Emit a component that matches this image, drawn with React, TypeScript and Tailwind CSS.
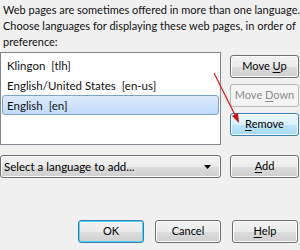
import * as React from 'react';

const font = { fontFamily: 'Lato, "Noto Sans", sans-serif' };

const btnBase =
  'h-[23px] rounded-[3px] border text-[11px] leading-[20px] text-center select-none whitespace-nowrap';
const btnNormal =
  'text-black border-[#707070] bg-[linear-gradient(to_bottom,#f2f2f2_0%,#ebebeb_50%,#dddddd_51%,#cfcfcf_100%)] shadow-[inset_0_0_0_1px_#fcfcfc]';
const btnHover =
  'text-black border-[#3c7fb1] bg-[linear-gradient(to_bottom,#eaf6fd_0%,#d9f0fc_50%,#bee6fd_51%,#a7d9f5_100%)] shadow-[inset_0_0_0_1px_#f4fbff]';
const btnDisabled = 'border-[#b5b9bc] bg-[#f4f4f4] text-[#8d8d8d]';
const btnDefault =
  'text-black border-[#3c7fb1] bg-[linear-gradient(to_bottom,#f2f2f2_0%,#ebebeb_50%,#dddddd_51%,#cfcfcf_100%)] shadow-[inset_0_0_0_1px_#48d3fb]';

// label with one underlined access key
const Label: React.FC<{ text: string; k?: number }> = ({ text, k }) => {
  if (k === undefined) return <>{text}</>;
  return (
    <>
      {text.slice(0, k)}
      <span className="underline underline-offset-[2px]">{text[k]}</span>
      {text.slice(k + 1)}
    </>
  );
};

const languages = [
  { name: 'Klingon', code: 'tlh' },
  { name: 'English/United States', code: 'en-us' },
  { name: 'English', code: 'en' },
];

export default function App() {
  const [selected] = React.useState(2);

  return (
    <div className="relative w-[300px] h-[250px] overflow-hidden bg-[#f0f0f0] text-[#111]" style={font}>
      <p className="pl-[3px] pt-[2px] text-[11px] leading-[16px] whitespace-nowrap">
        Web pages are sometimes offered in more than one language.
        <br />
        Choose languages for displaying these web pages, in order of
        <br />
        preference:
      </p>

      <div className="flex mt-[2px]">
        {/* language list */}
        <div className="w-[221px] h-[93px] border border-[#828790] bg-white pt-[2px] px-[1px]">
          {languages.map((l, i) => (
            <div
              key={l.code}
              className={
                'h-[20px] pl-[4px] text-[11.5px] leading-[19px] whitespace-pre rounded-[3px] border ' +
                (i === selected
                  ? 'border-[#7da2ce] bg-[linear-gradient(to_bottom,#dcebfc,#c1dbfc)]'
                  : 'border-transparent')
              }
            >
              {l.name + '  [' + l.code + ']'}
            </div>
          ))}
        </div>

        {/* side buttons */}
        <div className="ml-[9px] pt-[3px] flex flex-col gap-[6px]">
          <div className={`${btnBase} ${btnNormal} w-[69px]`}>
            <Label text="Move Up" k={5} />
          </div>
          <div className={`${btnBase} ${btnDisabled} w-[69px]`}>
            <Label text="Move Down" k={5} />
          </div>
          <div className={`${btnBase} ${btnHover} w-[69px]`}>
            <Label text="Remove" k={0} />
          </div>
        </div>
      </div>

      <div className="flex mt-[10px]">
        <div
          className={`h-[23px] w-[221px] rounded-[3px] border ${btnNormal} flex items-center justify-between pl-[3px] pr-[9px] text-[11.5px]`}
        >
          <span>Select a language to add...</span>
          <svg width="7" height="4" viewBox="0 0 7 4">
            <path d="M0 0H7L3.5 4Z" fill="#000" />
          </svg>
        </div>
        <div className={`${btnBase} ${btnNormal} w-[69px] ml-[9px]`}>
          <Label text="Add" k={0} />
        </div>
      </div>

      <div className="flex justify-end gap-[11px] mt-[42px] pr-[2px]">
        <div className={`${btnBase} ${btnDefault} w-[66px]`}>OK</div>
        <div className={`${btnBase} ${btnNormal} w-[66px]`}>Cancel</div>
        <div className={`${btnBase} ${btnNormal} w-[66px]`}>
          <Label text="Help" k={0} />
        </div>
      </div>

      {/* red annotation arrow */}
      <svg className="absolute left-0 top-0 pointer-events-none" width="300" height="250">
        <line x1="214" y1="73" x2="236" y2="117" stroke="#d42020" strokeWidth="1.3" />
        <path d="M239 123 L232 116 L238 113 Z" fill="#c41818" />
      </svg>
    </div>
  );
}
